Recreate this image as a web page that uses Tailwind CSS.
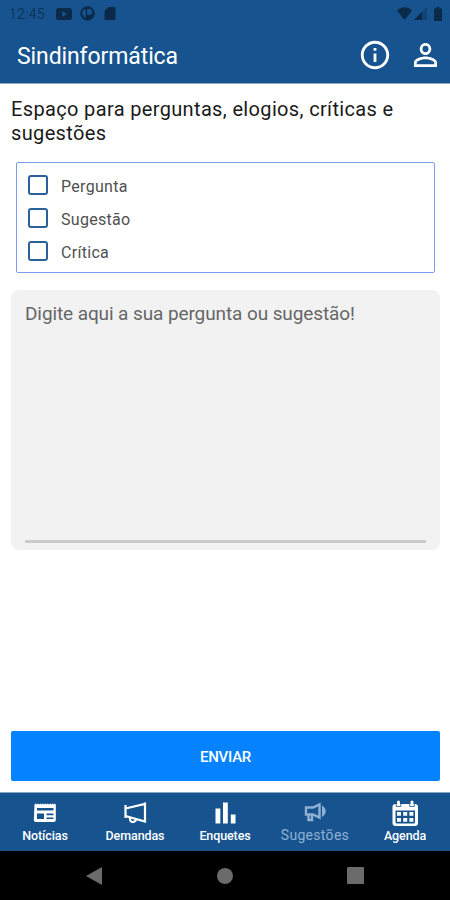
<!DOCTYPE html>
<html lang="pt-BR">
<head>
    <meta charset="UTF-8">
    <meta name="viewport" content="width=device-width, initial-scale=1.0">
    <title>Sindinformática</title>
    <script src="https://cdn.jsdelivr.net/npm/@tailwindcss/browser@4"></script>
</head>
<body class="h-[900px] w-[450px] overflow-hidden flex flex-col bg-white font-[Roboto,sans-serif]">

    <!-- Cabeçalho -->
    <header class="h-[84px] shrink-0 bg-[#17548f] border-b border-[#8ba5c4]">
        <!-- Barra de status -->
        <div class="h-[27px] flex items-center pl-[9px] pr-[8px] text-[#0b2a4a]">
            <span class="w-[47px] text-sm leading-none tracking-[0.2px] whitespace-nowrap text-[#0b2a4a]/75">12:45</span>
            <svg class="w-[16px] h-[12px]" viewBox="0 0 16 12" fill="currentColor"><path fill-rule="evenodd" d="M2.5 0h11Q16 0 16 2.5v7Q16 12 13.500 12h-11Q0 12 0 9.500v-7Q0 0 2.500 0zM6.200 3.200v5.600L11 6z"/></svg>
            <svg class="ml-[8px] w-[15px] h-[15px]" viewBox="0 0 15 15"><circle cx="7.500" cy="7.500" r="7.200" fill="currentColor"/><path d="M3.500 3.500h2.200v8.500a5.500 5.500 0 0 1-2.200-8.500zM7.200 3h2a2.700 2.700 0 0 1 0 5.800h-2z" fill="#17548f"/></svg>
            <svg class="ml-[9px] w-[12px] h-[13px]" viewBox="0 0 12 13" fill="currentColor"><path d="M4.500 0H10a1.500 1.500 0 0 1 1.500 1.500v10A1.500 1.500 0 0 1 10 13H2a1.500 1.500 0 0 1-1.500-1.500V4z"/></svg>
            <svg class="ml-auto w-[15px] h-[13px]" viewBox="0 0 15 13" fill="currentColor"><path d="M7.500 13 0 3.500C4.500-.8 10.500-.8 15 3.500z"/></svg>
            <svg class="ml-[2px] w-[14px] h-[13px]" viewBox="0 0 14 13" fill="currentColor"><path d="M0 13 13 0v13z" opacity=".4"/><path d="M0 13 8 5v8z"/></svg>
            <svg class="ml-[6px] w-[8px] h-[14px]" viewBox="0 0 8 14" fill="currentColor"><path d="M2.500 0h3v1.500H8V14H0V1.500h2.500z"/></svg>
        </div>
        <!-- Título e ações -->
        <div class="h-[56px] flex items-center pl-[17px] pr-[13px] text-white">
            <h1 class="pt-[2px] text-[23px] leading-none tracking-[-0.1px] whitespace-nowrap">Sindinformática</h1>
            <svg class="ml-auto w-[34px] h-[34px]" viewBox="0 0 24 24" fill="currentColor"><path d="M11 7h2v2h-2zm0 4h2v6h-2zm1-9C6.480 2 2 6.480 2 12s4.480 10 10 10 10-4.480 10-10S17.520 2 12 2zm0 18c-4.410 0-8-3.590-8-8s3.590-8 8-8 8 3.590 8 8-3.590 8-8 8z"/></svg>
            <svg class="ml-[22px] w-[23px] h-[24px]" viewBox="4 4 16 16" preserveAspectRatio="none" fill="currentColor"><path d="M12 5.900a2.100 2.100 0 1 1 0 4.200 2.100 2.100 0 0 1 0-4.200m0 9c2.970 0 6.100 1.460 6.100 2.100v1.100H5.900V17c0-.640 3.130-2.100 6.100-2.100M12 4C9.790 4 8 5.790 8 8s1.790 4 4 4 4-1.790 4-4-1.790-4-4-4zm0 9c-2.670 0-8 1.340-8 4v3h16v-3c0-2.660-5.330-4-8-4z"/></svg>
        </div>
    </header>

    <!-- Conteúdo -->
    <main class="grow flex flex-col pl-[11px] pr-[10px] pt-[13px] pb-[11px]">
        <h2 class="h-[48px] text-[20px] leading-[24px] tracking-[0.35px] text-[#1a1a1a] whitespace-nowrap">Espaço para perguntas, elogios, críticas e<br>sugestões</h2>

        <div class="mt-[17px] ml-[5px] mr-[5px] h-[111px] border border-[#7f9bf0] rounded-[2px] pl-[11px] pt-[7px]">
            <label class="h-[33px] flex items-center gap-[13px] text-base tracking-[0.3px] text-[#505050]">
                <span class="mb-[3px] size-5 border-2 border-[#2a619a] rounded-[3px]"></span>Pergunta
            </label>
            <label class="h-[33px] flex items-center gap-[13px] text-base tracking-[0.3px] text-[#505050]">
                <span class="mb-[3px] size-5 border-2 border-[#2a619a] rounded-[3px]"></span>Sugestão
            </label>
            <label class="h-[33px] flex items-center gap-[13px] text-base tracking-[0.3px] text-[#505050]">
                <span class="mb-[3px] size-5 border-2 border-[#2a619a] rounded-[3px]"></span>Crítica
            </label>
        </div>

        <div class="mt-[17px] h-[260px] rounded-[8px] bg-[#f2f2f2] px-[14px] pt-[12px] pb-[7px] flex flex-col">
            <p class="grow border-b-3 border-[#cbcbcb] text-[19px] leading-[24px] tracking-[-0.1px] text-[#666] whitespace-nowrap">Digite aqui a sua pergunta ou sugestão!</p>
        </div>

        <button class="mt-auto h-[50px] rounded-[2px] bg-[#0582ff] pt-[2px] text-white text-[15px] tracking-[-0.25px] font-medium">ENVIAR</button>
    </main>

    <!-- Navegação inferior -->
    <nav class="h-[59px] shrink-0 grid grid-cols-5 bg-[#17548f] border-t border-[#8ba5c4] text-white text-[12.5px] font-medium leading-[14px] tracking-[-0.1px]">
        <div class="flex flex-col items-center pt-[6px]">
            <svg class="w-[28px] h-[28px]" viewBox="0 0 28 28"><path d="M3.500 5.500l1.200-1 1.200 1 1.200-1 1.200 1 1.200-1 1.200 1 1.200-1 1.200 1 1.200-1 1.200 1 1.200-1 1.200 1 1.200-1 1.200 1 1.200-1 1.200 1 1.200-1 .9 1V21a2 2 0 0 1-2 2h-18a2 2 0 0 1-2-2z" fill="currentColor"/><path d="M6 9h16.500v2.500H6zM6 14.500h7v5.500H6zM15.500 14.500h7v1.800h-7zM15.500 18.500h7V20h-7z" fill="#17548f"/></svg>
            <span class="mt-[2px]">Notícias</span>
        </div>
        <div class="flex flex-col items-center pt-[6px]">
            <svg class="w-[28px] h-[28px]" viewBox="0 0 28 28" fill="none" stroke="currentColor" stroke-width="2.200"><path d="M4.500 6v13M4.500 9.500 24 5v17.500L4.500 17M24 3.500v20"/><path d="M9 18.500v1a3 3 0 0 0 6 1v-1"/></svg>
            <span class="mt-[2px]">Demandas</span>
        </div>
        <div class="flex flex-col items-center pt-[6px]">
            <svg class="w-[28px] h-[28px]" viewBox="0 0 28 28" fill="currentColor"><path d="M4.500 9.500h4.800V24.500H4.500zM12 3.500h4.800V24.500H12zM19.800 15.500h4.700v9h-4.700z"/></svg>
            <span class="mt-[2px]">Enquetes</span>
        </div>
        <div class="flex flex-col items-center pt-[6px] text-[#8fb0d3] text-[14px] font-normal">
            <svg class="w-[28px] h-[28px]" viewBox="0 0 28 28" fill="none" stroke="currentColor" stroke-width="2.400"><path d="M5 8.500h7L18.500 5.500v13L12 15.500H5zM7.500 15.500v5.500h3.500v-5.500"/><path d="M21 6.500c5 3 5 8.500 0 11.500z" fill="currentColor" stroke="none"/></svg>
            <span class="mt-px tracking-[0.3px]">Sugestões</span>
        </div>
        <div class="flex flex-col items-center pt-[6px]">
            <svg class="w-[28px] h-[28px]" viewBox="0 0 28 28"><path d="M7.500 3v4M21 3v4" stroke="currentColor" stroke-width="3" stroke-linecap="round"/><rect x="1.500" y="5" width="25.500" height="22" rx="3" fill="currentColor"/><path d="M4.500 11.500h19.500v11.500a1.500 1.500 0 0 1-1.500 1.500h-16.500A1.500 1.500 0 0 1 4.500 23z" fill="#17548f"/><path d="M6 13h4v3.800H6zM12.200 13h4v3.800h-4zM18.400 13h4v3.800h-4zM6 19h4v3.800H6zM12.200 19h4v3.800h-4zM18.400 19h4v3.800h-4z" fill="currentColor"/><path d="M5.200 4.500v3h4.600v-3M18.700 4.500v3h4.600v-3" stroke="#17548f" stroke-width=".8" fill="none"/></svg>
            <span class="mt-[2px]">Agenda</span>
        </div>
    </nav>

    <!-- Botões do sistema -->
    <div class="h-[49px] shrink-0 flex items-center bg-black text-[#6b6b6b]">
        <svg class="ml-[86px] w-[16px] h-[18px]" viewBox="0 0 16 18" fill="currentColor"><path d="M0 9 16 0v18z"/></svg>
        <div class="ml-[115px] size-4 rounded-full bg-current"></div>
        <div class="ml-[114px] size-[17px] rounded-[1px] bg-current"></div>
    </div>

</body>
</html>
